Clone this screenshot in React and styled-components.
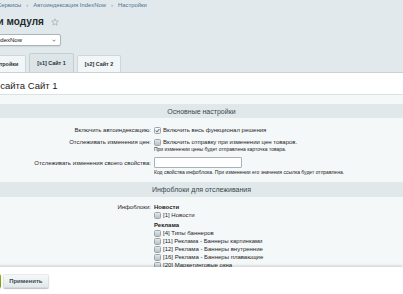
import styled, { createGlobalStyle } from 'styled-components'

const GlobalStyle = createGlobalStyle`
  html, body {
    margin: 0;
    padding: 0;
    background: #e2e9ec;
    font-family: "Liberation Sans", Arial, sans-serif;
    color: #000;
  }
`

const Page = styled.div`
  height: 294px;
  width: 403px;
  overflow: hidden;
  display: flex;
  flex-direction: column;
`

const Top = styled.div`
  margin-left: -49px;
  padding-top: 2px;
`

const Crumbs = styled.div`
  font-size: 5.9px;
  line-height: 7px;
  color: #4f7291;
  white-space: nowrap;
  margin-left: -3px;
`

const Sep = styled.span`
  margin: 0 5px;
  color: #7d93a5;
`

const TitleRow = styled.div`
  display: flex;
  align-items: center;
  margin-top: 7px;
  height: 12px;
`

const Title = styled.h1`
  margin: 0;
  font-size: 10px;
  line-height: 12px;
  font-weight: bold;
  color: #1f2a30;
  white-space: nowrap;
`

const Star = styled.svg`
  width: 8px;
  height: 8px;
  margin-left: 7px;
`

const Select = styled.div`
  margin-top: 6px;
  width: 110px;
  height: 12px;
  box-sizing: border-box;
  background: #fff;
  border: 1px solid #a9b5ba;
  border-radius: 2px;
  box-shadow: 0 1px 1px rgba(0, 0, 0, 0.08);
  display: flex;
  align-items: center;
  justify-content: space-between;
  padding: 0 4px 0 0;
  font-size: 6px;
  color: #111;
  white-space: nowrap;
  overflow: hidden;
`

const SelectText = styled.span`
  margin-left: -4px;
`

const Tabs = styled.div`
  display: flex;
  align-items: flex-end;
  gap: 3px;
  margin-top: 7px;
  padding-left: 2px;
`

const Tab = styled.div`
  height: ${p => (p.active ? 19 : 17)}px;
  box-sizing: border-box;
  padding: 0 7px;
  display: flex;
  align-items: center;
  font-size: 5.4px;
  font-weight: bold;
  color: #24313a;
  white-space: nowrap;
  background: ${p => (p.active ? '#dde5e8' : '#f3f6f7')};
  border: 1px solid ${p => (p.active ? '#c4ced2' : '#cfd7da')};
  border-bottom: none;
  border-radius: 2px 2px 0 0;
`

const Panel = styled.div`
  flex: 1;
  min-height: 0;
  overflow: hidden;
  border-top: 1px solid #c9d3d7;
  display: flex;
  flex-direction: column;
`

const PanelHead = styled.div`
  background: #fff;
  padding: 7px 0 3px;
  border-bottom: 1px solid #dbe2e5;
`

const Heading = styled.h2`
  margin: 0 0 0 -49px;
  font-size: 9.5px;
  line-height: 11px;
  font-weight: normal;
  color: #222;
  white-space: nowrap;
`

const Content = styled.div`
  flex: 1;
  background: #f5f8f9;
  padding-top: 9px;
`

const Band = styled.div`
  background: #e0e8ea;
  height: ${p => p.h || 14}px;
  margin-top: ${p => p.mt || 0}px;
  display: flex;
  align-items: center;
  justify-content: center;
  font-size: 7px;
  color: #3a464c;
`

const Form = styled.div`
  display: grid;
  grid-template-columns: 151px 1fr;
  column-gap: 3px;
  align-items: start;
  margin-top: ${p => p.mt || 0}px;
  row-gap: ${p => p.gap || 0}px;
`

const Label = styled.div`
  text-align: right;
  font-size: 6px;
  line-height: 8px;
  color: #1d1d1d;
  white-space: nowrap;
  margin-top: ${p => p.mt || 0}px;
`

const Value = styled.div`
  font-size: 6px;
  line-height: 8px;
  color: #1d1d1d;
  white-space: nowrap;
`

const CheckLine = styled.div`
  display: flex;
  align-items: center;
  gap: 2px;
  height: 8px;
`

const Box = styled.span`
  width: 7px;
  height: 7px;
  box-sizing: border-box;
  flex: none;
  border: 1px solid #9ba7ac;
  border-radius: 1.5px;
  background: ${p => (p.checked ? 'linear-gradient(#fbfcfc, #dfe5e7)' : 'linear-gradient(#e2e7e9, #b7c1c5)')};
  display: inline-flex;
  align-items: center;
  justify-content: center;
`

const Note = styled.div`
  font-size: 5px;
  line-height: 7px;
  color: #222;
  margin-top: ${p => p.mt || 0}px;
`

const Input = styled.div`
  width: 88px;
  height: 11px;
  box-sizing: border-box;
  background: #fff;
  border: 1px solid #a7b3b8;
  border-radius: 1px;
`

const Group = styled.div`
  font-weight: bold;
  font-size: 6px;
  line-height: 8px;
  margin-top: ${p => p.mt || 0}px;
`

const Footer = styled.div`
  height: 27px;
  flex: none;
  background: #fff;
  box-shadow: 0 -1px 3px rgba(0, 0, 0, 0.18);
  display: flex;
  align-items: flex-start;
  gap: 2px;
  padding-top: 7px;
  box-sizing: border-box;
  margin-left: -43px;
  position: relative;
`

const Button = styled.div`
  height: 14px;
  box-sizing: border-box;
  padding: 0 6px;
  display: flex;
  align-items: center;
  border-radius: 2px;
  font-size: 6px;
  font-weight: bold;
  white-space: nowrap;
  color: ${p => (p.green ? '#fff' : '#3b4a52')};
  background: ${p => (p.green ? 'linear-gradient(#9cc21a, #7aa300)' : 'linear-gradient(#f8fafa, #e1e8ea)')};
  box-shadow: 0 1px 1px rgba(0, 0, 0, 0.25), inset 0 0 0 1px rgba(0, 0, 0, 0.06);
`

const Tick = () => (
  <svg width="5" height="5" viewBox="0 0 10 10">
    <path d="M1.5 5.2 L4 7.8 L8.8 2" fill="none" stroke="#34505f" strokeWidth="1.8" />
  </svg>
)

const Check = ({ checked, children }) => (
  <CheckLine>
    <Box checked={checked}>{checked && <Tick />}</Box>
    {children}
  </CheckLine>
)

const advert = [
  '[4] Типы баннеров',
  '[11] Реклама - Баннеры картинками',
  '[12] Реклама - Баннеры внутренние',
  '[16] Реклама - Баннеры плавающие',
  '[20] Маркетинговые окна',
]

export default function App() {
  return (
    <>
      <GlobalStyle />
      <Page>
        <Top>
          <Crumbs>
            Рабочий стол<Sep>›</Sep>Сервисы<Sep>›</Sep>Автоиндексация IndexNow<Sep>›</Sep>Настройки
          </Crumbs>
          <TitleRow>
            <Title>Настройки модуля</Title>
            <Star viewBox="0 0 24 24">
              <polygon
                points="12,2.5 14.9,9 22,9.6 16.6,14.3 18.2,21.3 12,17.6 5.8,21.3 7.4,14.3 2,9.6 9.1,9"
                fill="none"
                stroke="#9aa8af"
                strokeWidth="2"
                strokeLinejoin="round"
              />
            </Star>
          </TitleRow>
          <Select>
            <SelectText>Автоиндексация IndexNow</SelectText>
            <svg width="4" height="3" viewBox="0 0 8 5">
              <path d="M1 1 L4 4 L7 1" fill="none" stroke="#555" strokeWidth="1.4" />
            </svg>
          </Select>
          <Tabs>
            <Tab>Основные настройки</Tab>
            <Tab active>[s1] Сайт 1</Tab>
            <Tab>[s2] Сайт 2</Tab>
          </Tabs>
        </Top>
        <Panel>
          <PanelHead>
            <Heading>Настройки сайта Сайт 1</Heading>
          </PanelHead>
          <Content>
            <Band>Основные настройки</Band>
            <Form mt={8} gap={4}>
              <Label>Включить автоиндексацию:</Label>
              <Value>
                <Check checked>Включить весь функционал решения</Check>
              </Value>
              <Label>Отслеживать изменения цен:</Label>
              <Value>
                <Check>Включить отправку при изменении цен товаров.</Check>
                <Note>При изменении цены будет отправлена карточка товара.</Note>
              </Value>
              <Label mt={2}>Отслеживать изменения своего свойства:</Label>
              <Value>
                <Input />
                <Note mt={1}>
                  Код свойства инфоблока. При изменении его значения ссылка будет отправлена.
                </Note>
              </Value>
            </Form>
            <Band h={15} mt={6}>Инфоблоки для отслеживания</Band>
            <Form mt={6}>
              <Label>Инфоблоки:</Label>
              <Value>
                <Group>Новости</Group>
                <Check>[1] Новости</Check>
                <Group mt={2}>Реклама</Group>
                {advert.map(a => (
                  <Check key={a}>{a}</Check>
                ))}
              </Value>
            </Form>
          </Content>
        </Panel>
        <Footer>
          <Button green>Сохранить</Button>
          <Button>Применить</Button>
        </Footer>
      </Page>
    </>
  )
}
